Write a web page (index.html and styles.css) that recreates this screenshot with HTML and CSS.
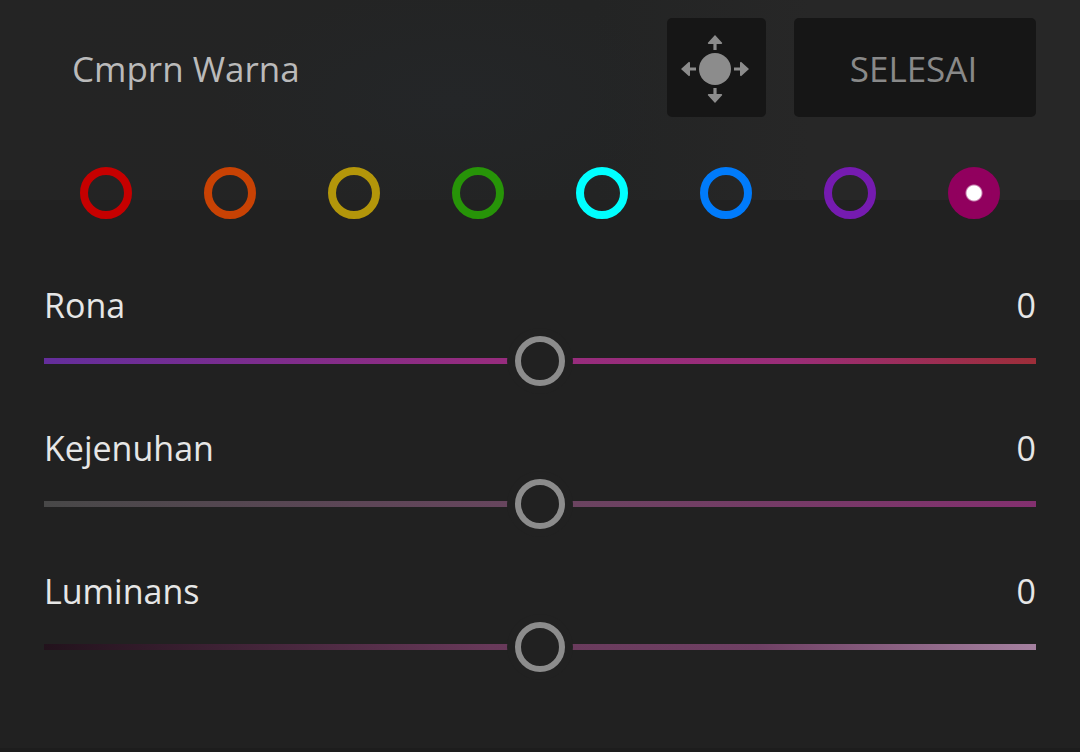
FILE: index.html
```html
<!DOCTYPE html>
<html lang="id">
<head>
  <meta charset="UTF-8">
  <meta name="viewport" content="width=device-width, initial-scale=1.0">
  <title>Cmprn Warna</title>
  <link rel="stylesheet" href="styles.css">
</head>
<body>
  <main class="panel">
    <header class="panel-header">
      <h1>Cmprn Warna</h1>
      <button type="button" class="btn target-btn" aria-label="Penyesuaian target">
        <svg class="target-icon" viewBox="0 0 70 70" aria-hidden="true">
          <circle cx="35" cy="35" r="16"/>
          <path id="arrow" d="M35 1 L42.3 9 L41.6 10 H36.6 V16 H33.4 V10 H28.4 L27.7 9 Z"/>
          <use href="#arrow" transform="rotate(90 35 35)"/>
          <use href="#arrow" transform="rotate(180 35 35)"/>
          <use href="#arrow" transform="rotate(270 35 35)"/>
        </svg>
      </button>
      <button type="button" class="btn done-btn">SELESAI</button>
    </header>

    <div class="swatches" role="radiogroup" aria-label="Warna">
      <input type="radio" name="color" class="swatch red" aria-label="Merah">
      <input type="radio" name="color" class="swatch orange" aria-label="Oranye">
      <input type="radio" name="color" class="swatch yellow" aria-label="Kuning">
      <input type="radio" name="color" class="swatch green" aria-label="Hijau">
      <input type="radio" name="color" class="swatch aqua" aria-label="Aqua">
      <input type="radio" name="color" class="swatch blue" aria-label="Biru">
      <input type="radio" name="color" class="swatch purple" aria-label="Ungu">
      <input type="radio" name="color" class="swatch magenta" aria-label="Magenta" checked>
    </div>

    <div class="sliders">
      <div class="slider">
        <label for="hue">Rona</label>
        <output for="hue">0</output>
        <input type="range" id="hue" class="hue" min="-100" max="100" value="0">
      </div>
      <div class="slider">
        <label for="saturation">Kejenuhan</label>
        <output for="saturation">0</output>
        <input type="range" id="saturation" class="saturation" min="-100" max="100" value="0">
      </div>
      <div class="slider">
        <label for="luminance">Luminans</label>
        <output for="luminance">0</output>
        <input type="range" id="luminance" class="luminance" min="-100" max="100" value="0">
      </div>
    </div>
  </main>

  <script>
    document.querySelectorAll('.slider').forEach(function(slider) {
      const input = slider.querySelector('input');
      input.addEventListener('input', function() {
        slider.querySelector('output').value = input.value;
      });
    });
  </script>
</body>
</html>
```

FILE: styles.css
```css
* {
  box-sizing: border-box;
}
body {
  margin: 0;
  background-color: #1d1d1d;
  color: #e6e6e6;
  font-family: "Open Sans", "Noto Sans", sans-serif;
  font-size: 34px;
  line-height: 44px;
}
.panel {
  padding: 18px 44px 76px;
  background-color: #212121;
  /* dimmed photo showing through behind the header */
  background-image:
    radial-gradient(ellipse 22% 110px at 42% 100px, #242628, transparent),
    linear-gradient(90deg, #242424, #232424 55%, #272727 75%, #272727);
  background-size: 100% 200px;
  background-repeat: no-repeat;
}
.panel-header {
  display: flex;
  align-items: center;
  gap: 28px;
  padding-left: 28px;
  font-size: 35px;
}
h1 {
  flex: 1;
  margin: 0;
  padding-top: 3px;
  color: #bababa;
  font-size: 35px;
  font-weight: 400;
}
.btn {
  height: 99px;
  padding: 3px 3px 0 0;
  border: none;
  border-radius: 5px;
  background-color: #161616;
  color: #898989;
  font: inherit;
  cursor: pointer;
}
.target-btn {
  display: flex;
  align-items: center;
  justify-content: center;
  width: 99px;
}
.target-icon {
  width: 70px;
  height: 70px;
  fill: #8c8c8c;
}
.done-btn {
  width: 242px;
}
.swatches {
  display: grid;
  grid-template-columns: repeat(8, 1fr);
  justify-items: center;
  margin-top: 50px;
}
.swatch {
  appearance: none;
  width: 52px;
  height: 52px;
  margin: 0;
  border: 8px solid;
  border-radius: 50%;
  cursor: pointer;
}
.swatch:checked {
  background: radial-gradient(circle, #fff 7px, currentColor 9px) border-box;
}
.red {
  color: #c60000;
}
.orange {
  color: #c84204;
}
.yellow {
  color: #b3960a;
}
.green {
  color: #279408;
}
.aqua {
  color: #00ffff;
}
.blue {
  color: #007bfb;
}
.purple {
  color: #751bb0;
}
.magenta {
  color: #91005e;
}
.sliders {
  display: grid;
  gap: 40px;
  margin-top: 64px;
}
.slider {
  display: grid;
  grid-template-columns: 1fr auto;
  row-gap: 9px;
}
.slider input {
  grid-column: 1 / -1;
  appearance: none;
  width: 100%;
  height: 50px;
  margin: 0;
  background: none;
}
.slider input::-webkit-slider-runnable-track {
  height: 6px;
  background: var(--track);
}
.slider input::-webkit-slider-thumb {
  appearance: none;
  width: 50px;
  height: 50px;
  margin-top: -22px;
  border: 6px solid #8c8c8c;
  border-radius: 50%;
  background-color: #212121;
  box-shadow: 0 0 0 8px #212121;
  cursor: pointer;
}
.hue {
  --track: linear-gradient(90deg, #642e9c, #962c7e 45%, #9a2d78 75%, #9d2e39);
}
.saturation {
  --track: linear-gradient(90deg, #484848, #69455f 50%, #83306f);
}
.luminance {
  --track: linear-gradient(90deg, #22121c, #68395a 45%, #6f4064 72%, #a581a0);
}
```
